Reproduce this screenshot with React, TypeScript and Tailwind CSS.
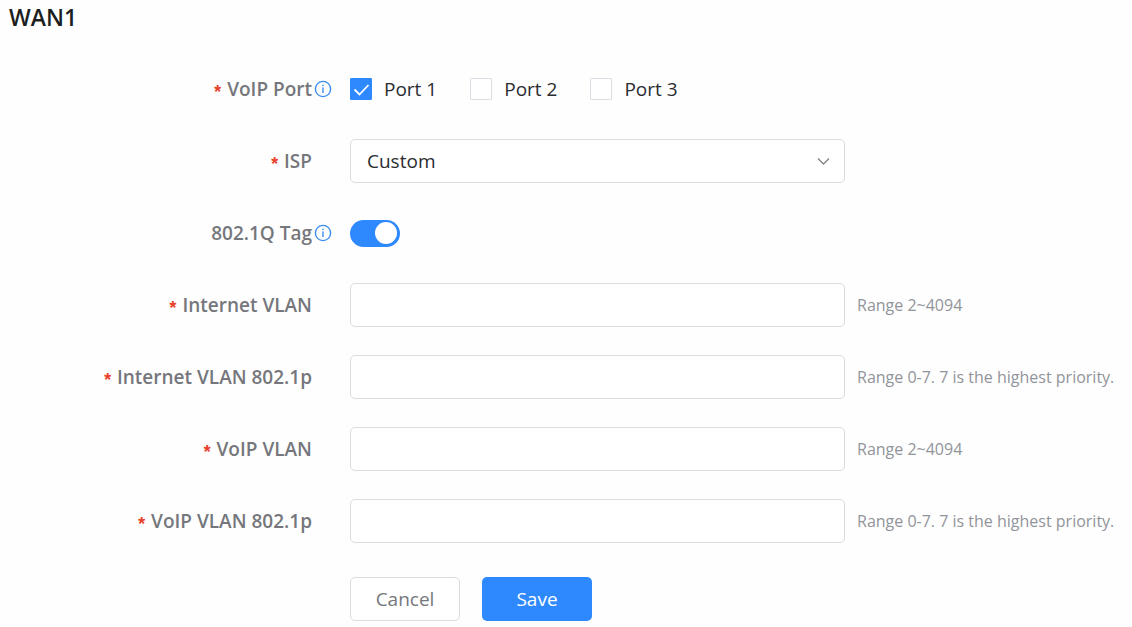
import React, { useState } from 'react';

interface FormRowProps {
  label: string;
  htmlFor?: string;
  required?: boolean;
  info?: string;
  hint?: string;
  children: React.ReactNode;
}

const InfoIcon: React.FC = () => (
  <svg viewBox="0 0 18 18" className="h-[18px] w-[18px]" fill="none" stroke="#3b8cf0" strokeWidth="1.4" aria-hidden="true">
    <circle cx="9" cy="9" r="7.6" />
    <path d="M9 7.5v5.5" />
    <path d="M9 4.7v1.5" />
  </svg>
);

const FormRow: React.FC<FormRowProps> = ({ label, htmlFor, required, info, hint, children }) => {
  const text = (
    <>
      {required && <span className="mr-1 pt-2 font-['Liberation_Mono',monospace] text-lg font-bold leading-none text-[#e8402a]" aria-hidden="true">*</span>}
      {label}
    </>
  );
  const textClass = 'flex items-center whitespace-nowrap text-[19px] font-semibold text-[#75777c]';

  return (
    <div className="grid min-h-11 grid-cols-[350px_minmax(0,495px)_auto] items-center">
      <div className="flex items-center justify-end">
        {htmlFor ? <label htmlFor={htmlFor} className={textClass}>{text}</label> : <span className={textClass}>{text}</span>}
        <div className="flex w-[38px] pl-0.5">
          {info && (
            <button type="button" aria-label={info}>
              <InfoIcon />
            </button>
          )}
        </div>
      </div>
      {children}
      {hint && <p className="whitespace-nowrap pl-3 text-base text-[#929499]">{hint}</p>}
    </div>
  );
};

const ports = ['Port 1', 'Port 2', 'Port 3'];

const vlanFields = [
  { id: 'internet-vlan', label: 'Internet VLAN', hint: 'Range 2~4094' },
  { id: 'internet-vlan-priority', label: 'Internet VLAN 802.1p', hint: 'Range 0-7. 7 is the highest priority.' },
  { id: 'voip-vlan', label: 'VoIP VLAN', hint: 'Range 2~4094' },
  { id: 'voip-vlan-priority', label: 'VoIP VLAN 802.1p', hint: 'Range 0-7. 7 is the highest priority.' },
];

const App: React.FC = () => {
  const [selected, setSelected] = useState<string[]>(['Port 1']);
  const [tagged, setTagged] = useState(true);
  const [values, setValues] = useState<Record<string, string>>({});

  const togglePort = (port: string) => {
    setSelected((prev) => (prev.includes(port) ? prev.filter((p) => p !== port) : [...prev, port]));
  };

  return (
    <main className="min-h-screen bg-[#fefefe] font-['Open_Sans','Noto_Sans',sans-serif] text-[#2a2c30]">
      <h1 className="px-[9px] pt-[3px] text-[23px] font-semibold leading-7 text-[#1c1e21]">WAN1</h1>

      <form className="pt-9" onSubmit={(e) => e.preventDefault()}>
        <div className="space-y-7">
          <FormRow label="VoIP Port" required info="About VoIP Port">
            <div className="flex gap-[33px]" role="group" aria-label="VoIP Port">
              {ports.map((port) => (
                <label key={port} className="flex items-center gap-3 whitespace-nowrap text-[19px]">
                  <span className="grid h-[22px] w-[22px] place-items-center">
                    <input
                      type="checkbox"
                      checked={selected.includes(port)}
                      onChange={() => togglePort(port)}
                      className="peer col-start-1 row-start-1 h-[22px] w-[22px] appearance-none rounded-[1px] border border-[#dcdee6] bg-white checked:border-[#2e89ff] checked:bg-[#2e89ff]"
                    />
                    <svg viewBox="0 0 22 22" className="pointer-events-none col-start-1 row-start-1 hidden h-[22px] w-[22px] peer-checked:block" fill="none" stroke="white" strokeWidth="1.8">
                      <path d="M4.5 11.5l5 5 9-9.5" />
                    </svg>
                  </span>
                  {port}
                </label>
              ))}
            </div>
          </FormRow>

          <FormRow label="ISP" htmlFor="isp" required>
            <div className="grid items-center">
              <select id="isp" className="col-start-1 row-start-1 h-11 w-full appearance-none rounded-[5px] border border-[#dadce0] bg-white px-4 text-[19px]">
                <option>Custom</option>
              </select>
              <svg viewBox="0 0 14 14" className="pointer-events-none col-start-1 row-start-1 mr-3.5 h-3.5 w-3.5 justify-self-end" fill="none" stroke="#85878c" strokeWidth="1.4">
                <path d="M1 4.5L6.5 10 12 4.5" />
              </svg>
            </div>
          </FormRow>

          <FormRow label="802.1Q Tag" htmlFor="tag" info="About 802.1Q Tag">
            <button
              id="tag"
              type="button"
              role="switch"
              aria-checked={tagged}
              onClick={() => setTagged(!tagged)}
              className={`flex h-[27px] w-[50px] items-center rounded-full px-[3px] ${tagged ? 'justify-end bg-[#2e89ff]' : 'justify-start bg-[#c4c7cc]'}`}
            >
              <span className="h-[22px] w-[22px] rounded-full bg-white"></span>
            </button>
          </FormRow>

          {vlanFields.map((field) => (
            <FormRow key={field.id} label={field.label} htmlFor={field.id} hint={field.hint} required>
              <input
                id={field.id}
                type="text"
                value={values[field.id] ?? ''}
                onChange={(e) => setValues({ ...values, [field.id]: e.target.value })}
                className="h-11 w-full rounded-[5px] border border-[#dadce0] bg-white px-4 text-[19px]"
              />
            </FormRow>
          ))}
        </div>

        <div className="flex gap-[22px] pl-[350px] pt-[34px]">
          <button type="button" className="h-11 w-[110px] rounded-[5px] border border-[#dadce0] bg-white text-[19px] text-[#75777c]">Cancel</button>
          <button type="submit" className="h-11 w-[110px] rounded-[5px] bg-[#2e89ff] text-[19px] text-white">Save</button>
        </div>
      </form>
    </main>
  );
};

export default App;
